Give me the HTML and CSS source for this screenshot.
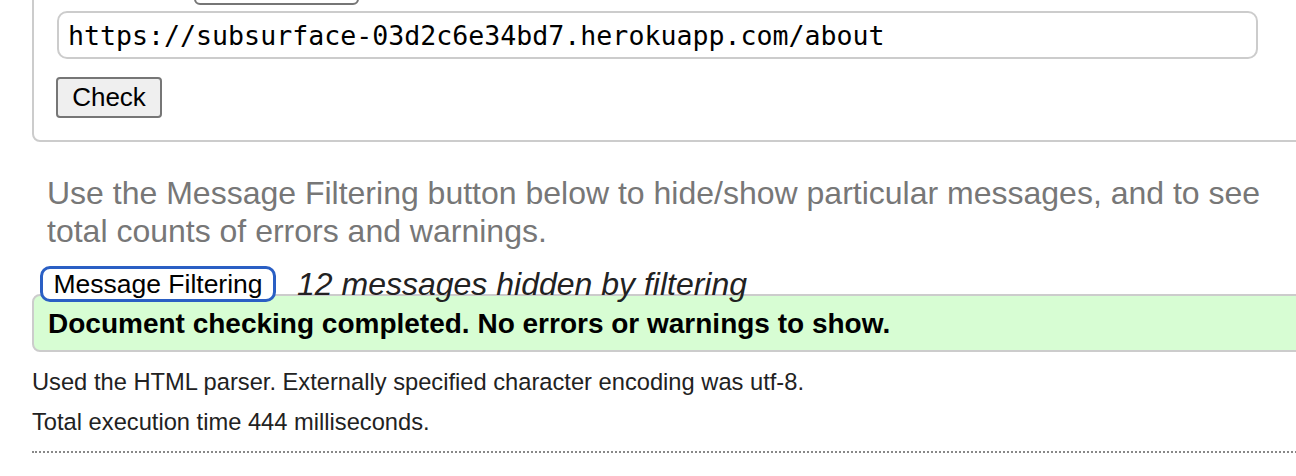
FILE: index.html
```html
<!DOCTYPE html>
<html>
<head>
<meta charset="utf-8">
<link rel="stylesheet" href="styles.css">
</head>
<body>
<div class="page">
  <div class="checker">
    <div class="by-row">
      <span class="by-label">Check by</span>
      <span class="select">address</span>
    </div>
    <div class="url-input">https://subsurface-03d2c6e34bd7.herokuapp.com/about</div>
    <button class="check-btn">Check</button>
  </div>

  <p class="note">Use the Message Filtering button below to hide/show particular messages, and to see total counts of errors and warnings.</p>

  <div class="filter-row">
    <button class="filter-btn">Message Filtering</button>
    <span class="hidden-count">12 messages hidden by filtering</span>
  </div>
  <div class="success">Document checking completed. No errors or warnings to show.</div>

  <p class="meta">Used the HTML parser. Externally specified character encoding was utf-8.</p>
  <p class="meta">Total execution time 444 milliseconds.</p>
  <div class="dots"></div>
</div>
</body>
</html>
```

FILE: styles.css
```css
html, body {
  margin: 0;
  padding: 0;
  background: #fff;
  overflow: hidden;
}

.page {
  margin-top: -34px;
  padding-left: 32px;
  font-family: "Liberation Sans", Arial, sans-serif;
  color: #222;
}

.checker {
  border: 2px solid #ccc;
  border-radius: 8px;
  padding: 4px 0 22px 23px;
  width: 1320px;
  box-sizing: border-box;
}

.by-row {
  display: flex;
  align-items: flex-end;
  height: 33px;
  gap: 14px;
  padding-left: 15px;
  font-size: 26px;
}

.by-label {
  line-height: 26px;
  margin-bottom: 6px;
}

.select {
  display: block;
  width: 165px;
  height: 30px;
  box-sizing: border-box;
  border: 2px solid #767676;
  border-radius: 6px;
  font-size: 20px;
  line-height: 26px;
  padding-left: 8px;
  color: #000;
}

.url-input {
  margin-top: 6px;
  width: 1201px;
  height: 48px;
  box-sizing: border-box;
  border: 2px solid #ccc;
  border-radius: 10px;
  padding: 0 9px;
  font-family: "DejaVu Sans Mono", "Liberation Mono", monospace;
  font-size: 26.6px;
  line-height: 46px;
  color: #000;
  white-space: nowrap;
}

.check-btn {
  display: block;
  margin-top: 18px;
  margin-left: -1px;
  width: 106px;
  height: 41px;
  box-sizing: border-box;
  font-family: "Liberation Sans", Arial, sans-serif;
  font-size: 26px;
  color: #000;
  background: #efefef;
  border: 2px solid #767676;
  border-radius: 4px;
  padding: 0;
}

.note {
  margin: 32px 0 0 15px;
  font-size: 32px;
  line-height: 38px;
  color: #777;
  width: 1232px;
}

.filter-row {
  display: flex;
  align-items: flex-end;
  margin-top: 16px;
  margin-left: 8px;
  height: 28px;
  gap: 21px;
  position: relative;
  z-index: 1;
}

.filter-btn {
  flex: none;
  width: 236px;
  height: 36px;
  box-sizing: border-box;
  margin-bottom: -8px;
  font-family: "Liberation Sans", Arial, sans-serif;
  font-size: 26.5px;
  color: #000;
  background: #fff;
  border: 3px solid #2a5fc4;
  border-radius: 10px;
  padding: 0;
}

.hidden-count {
  font-style: italic;
  font-size: 32px;
  line-height: 32px;
  color: #222;
  margin-bottom: -6px;
}

.success {
  width: 1320px;
  height: 58px;
  box-sizing: border-box;
  border: 2px solid #ccc;
  border-radius: 8px;
  background: #d7fdd3;
  padding-left: 14px;
  font-weight: bold;
  font-size: 28px;
  line-height: 56px;
  color: #000;
}

.meta {
  margin: 18px 0 0 0;
  font-size: 23.7px;
  line-height: 24px;
  color: #222;
}

.meta + .meta {
  margin-top: 16px;
}

.dots {
  margin-top: 17px;
  border-top: 2px dotted #888;
  width: 1300px;
}
```
